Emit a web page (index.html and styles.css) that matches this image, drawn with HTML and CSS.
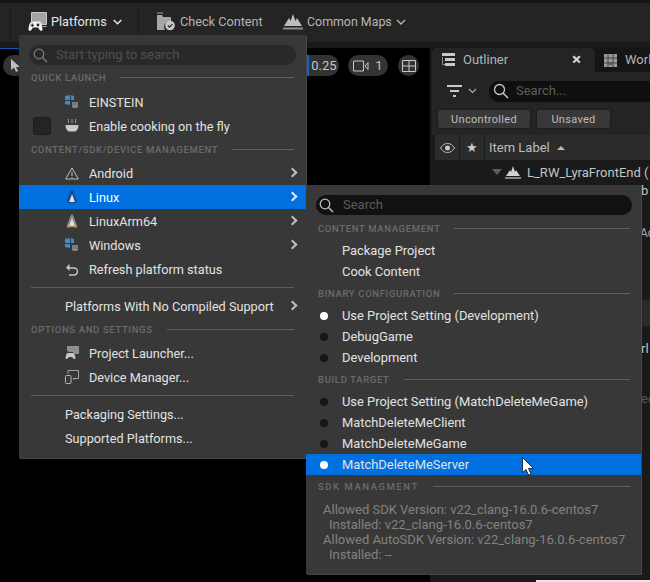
FILE: index.html
```html
<!DOCTYPE html>
<html lang="en">
<head>
<meta charset="utf-8">
<title>Platforms menu</title>
<link rel="stylesheet" href="styles.css">
</head>
<body>
<div class="app">
  <header class="toolbar">
    <div class="tool tool-platforms">
      <svg class="tool-ic" width="19" height="20" viewBox="0 0 19 20"><path d="M3.500.5h15v12h-5l-1-3H5l-1.500 1z" fill="#a4a4a4" stroke="#e2e2e2" stroke-width=".8"/><path d="M14.500 14.500h4" stroke="#aaa"/><path d="M4 10h7c2 0 3 2.500 3.500 7 .2 2-1.800 2.500-2.800 1l-1.700-2.500H5L3.300 18c-1 1.500-3 1-2.800-1C1 12.500 2 10 4 10z" fill="#f4f4f4"/><path d="M2.500 13.200h3.600M4.300 11.400V15" stroke="#222" stroke-width="1.100"/><circle cx="10" cy="13" r="1.400" fill="#222"/></svg>
      <span class="tool-label bright">Platforms</span>
      <svg class="chev" width="9" height="6" viewBox="0 0 9 6"><path d="M.7 1l3.800 3.800L8.300 1" fill="none" stroke="#e8e8e8" stroke-width="1.500"/></svg>
    </div>
    <div class="tool tool-check">
      <svg class="tool-ic" width="19" height="19" viewBox="0 0 19 19"><path d="M1 3h5l1 2h8v4a6 6 0 0 0-6 9H1z" fill="#a6a6a6"/><path d="M1 1h6" stroke="#777" stroke-width="1.500"/><circle cx="14" cy="13.500" r="4.800" fill="#c8c8c8"/><path d="M11.800 13.500l1.700 1.700 2.800-3" fill="none" stroke="#222" stroke-width="1.200"/></svg>
      <span class="tool-label">Check Content</span>
    </div>
    <div class="tool tool-maps">
      <svg class="tool-ic" width="20" height="16" viewBox="0 0 20 16"><path d="M1 12L6 4l1.500 3L10 0l2.500 7L14 4l5 8z" fill="#bdbdbd"/><path d="M0 14.500h20" stroke="#8d8d8d" stroke-width="2"/></svg>
      <span class="tool-label tool-label-maps">Common Maps</span>
      <svg class="chev" width="10" height="6" viewBox="0 0 10 6"><path d="M1 1l4 4 4-4" fill="none" stroke="#b8b8b8" stroke-width="1.300"/></svg>
    </div>
  </header>

  <main class="workspace">
    <section class="viewport">
      <div class="vp-controls">
        <span class="pill pill-select">
          <svg width="11" height="15" viewBox="0 0 11 15"><path d="M1 1v11l3-2.500 2 4.500 2-1-2-4h4z" fill="#bdbdbd"/></svg>
        </span>
        <span class="vp-right">
          <span class="pill pill-speed">0.25</span>
          <span class="pill pill-cam">
            <svg width="16" height="12" viewBox="0 0 16 12"><path d="M.5 1h10v10H.5zM15 2.500L12 6l3 3.500z" fill="none" stroke="#c8c8c8"/></svg>
            <span>1</span>
          </span>
          <span class="pill pill-grid">
            <svg width="14" height="12" viewBox="0 0 14 12"><path d="M.5.500h13v11H.5zM.5 6h13M7 .5v11" fill="none" stroke="#c8c8c8"/></svg>
          </span>
        </span>
      </div>
    </section>

    <aside class="panel">
      <div class="tabs">
        <div class="tab tab-active">
          <svg class="fix" width="15" height="15" viewBox="0 0 15 15"><path d="M1 0h13v3H1zM4 5h10v3H4zM4 10h10v3H4z" fill="#c8c8c8"/><path d="M1.500 4v7.500H4" fill="none" stroke="#888"/></svg>
          <span class="tab-name">Outliner</span>
          <span class="tab-x">×</span>
        </div>
        <div class="tab tab-other">
          <svg class="fix" width="13" height="13" viewBox="0 0 13 13"><rect width="13" height="13" fill="#9a9a9a"/><path d="M4 0v13M9 0v13M0 4h13M0 9h13" stroke="#444"/><rect x="5" y="8" width="3" height="3" fill="#2d5fa8"/></svg>
          <span class="tab-name">Worl</span>
        </div>
      </div>
      <div class="filter-row">
        <svg class="fix" width="15" height="12" viewBox="0 0 15 12"><path d="M0 1h15M3 6h9M6 11h3" stroke="#c8c8c8" stroke-width="2"/></svg>
        <svg class="fix" width="9" height="6" viewBox="0 0 9 6"><path d="M1 1l3.500 3.500L8 1" fill="none" stroke="#aaa" stroke-width="1.200"/></svg>
        <div class="panel-search">
          <svg class="fix" width="16" height="16" viewBox="0 0 16 16"><circle cx="6.500" cy="6.500" r="5" fill="none" stroke="#c8c8c8" stroke-width="1.300"/><path d="M10 10l5 5" stroke="#c8c8c8" stroke-width="1.500"/></svg>
          <span>Search...</span>
        </div>
      </div>
      <div class="chip-row">
        <span class="chip chip-a">Uncontrolled</span>
        <span class="chip chip-b">Unsaved</span>
      </div>
      <div class="col-head">
        <span class="col col-eye"><svg width="15" height="10" viewBox="0 0 15 10"><path d="M.5 5C3 1.500 5 .5 7.500.5S12 1.500 14.500 5C12 8.500 10 9.500 7.500 9.500S3 8.500.5 5z" fill="none" stroke="#c8c8c8"/><circle cx="7.500" cy="5" r="2.500" fill="#c8c8c8"/></svg></span>
        <span class="col col-star">★</span>
        <span class="col col-label">Item Label <i class="sort-up"></i></span>
      </div>
      <div class="tree-row">
        <i class="expander"></i>
        <svg class="fix" width="16" height="13" viewBox="0 0 16 13"><path d="M1 10l4-6 1 2 2-6 2 6 1-2 4 6z" fill="#d0d0d0"/><path d="M0 12h16" stroke="#aaa" stroke-width="1.500"/></svg>
        <span>L_RW_LyraFrontEnd (</span>
      </div>
      <div class="peek peek-b">b</div>
      <div class="peek peek-ac">Ac</div>
      <div class="peek-band"></div>
      <div class="peek peek-rl">rl</div>
      <div class="peek peek-ed">ed</div>
    </aside>
  </main>
  <div class="bottom-edge"><span class="bottom-white"></span></div>
</div>

<nav class="menu menu-main">
  <div class="search search-main">
    <svg class="fix" width="15" height="15" viewBox="0 0 15 15"><circle cx="6" cy="6" r="4.800" fill="none" stroke="#777" stroke-width="1.300"/><path d="M9.500 9.500l4.500 4.500" stroke="#777" stroke-width="1.500"/></svg>
    <span>Start typing to search</span>
  </div>
  <div class="head head-main"><span>QUICK LAUNCH</span></div>
  <div class="row"><span class="lead"></span>
    <svg class="ic" width="14" height="14" viewBox="0 0 14 14"><path d="M0 1l5-1v5H0zM6 0l3 1v4H6zM0 6h5v4L0 9z" fill="#3f8cc4"/><path d="M8 7v5h4V7M10 7v5" fill="none" stroke="#b5b5b5" stroke-width="1.100"/></svg>
    <span>EINSTEIN</span></div>
  <div class="row"><span class="lead"><i class="check"></i></span>
    <svg class="ic" width="13" height="14" viewBox="0 0 13 14"><path d="M3 0v4M6.500 0v4M10 0v4" stroke="#999"/><path d="M0 6h13c0 4-2 6-3 6.500H3C2 12 0 10 0 6z" fill="#c8c8c8"/></svg>
    <span>Enable cooking on the fly</span></div>
  <div class="head head-main"><span>CONTENT/SDK/DEVICE MANAGEMENT</span></div>
  <div class="row"><span class="lead"></span>
    <svg class="ic" width="14" height="13" viewBox="0 0 14 13"><path d="M7 1l6.300 11H.7zM7 5v4M7 10v1" fill="none" stroke="#bdbdbd"/></svg>
    <span>Android</span><i class="arrow"></i></div>
  <div class="row row-on"><span class="lead"></span>
    <svg class="ic" width="12" height="14" viewBox="0 0 12 14"><path d="M6 0c2 2 3 7 5 11 0 1-1 2-1 2H2s-1-1-1-2C3 7 4 2 6 0z" fill="#14477f"/><path d="M6 4c1 3 2 5 3 8H3c1-3 2-5 3-8z" fill="#d3e3f2"/></svg>
    <span>Linux</span><i class="arrow"></i></div>
  <div class="row"><span class="lead"></span>
    <svg class="ic" width="12" height="14" viewBox="0 0 12 14"><path d="M6 0c2 2 3 7 5 11 0 1-1 2-1 2H2s-1-1-1-2C3 7 4 2 6 0z" fill="#8a8a8a"/><path d="M6 4c1 3 2 5 3 8H3c1-3 2-5 3-8z" fill="#e0e0e0"/><path d="M1 11.500h3.500v2H1zM7.500 11.500H11v2H7.500z" fill="#c8913f"/></svg>
    <span>LinuxArm64</span><i class="arrow"></i></div>
  <div class="row"><span class="lead"></span>
    <svg class="ic" width="14" height="14" viewBox="0 0 14 14"><path d="M0 1l5-1v5H0zM6 0l3 1v4H6zM0 6h5v4L0 9z" fill="#3f8cc4"/><path d="M8 7v5h4V7M10 7v5" fill="none" stroke="#b5b5b5" stroke-width="1.100"/></svg>
    <span>Windows</span><i class="arrow"></i></div>
  <div class="row"><span class="lead"></span>
    <svg class="ic" width="14" height="13" viewBox="0 0 14 13"><path d="M3 5h6a3.500 3.500 0 0 1 0 7H4" fill="none" stroke="#c4c4c4" stroke-width="1.400"/><path d="M1 4.500L4.500 1v7z" fill="#c4c4c4"/></svg>
    <span>Refresh platform status</span></div>
  <div class="sep sep-a"></div>
  <div class="row row-plain"><span>Platforms With No Compiled Support</span><i class="arrow"></i></div>
  <div class="head head-main"><span>OPTIONS AND SETTINGS</span></div>
  <div class="row"><span class="lead"></span>
    <svg class="ic" width="14" height="14" viewBox="0 0 14 14"><path d="M2 0h12v8H9L8 6H4L2 5z" fill="#8e8e8e"/><path d="M3 7h5c1.500 0 2 2 2.500 5 0 1-1 1.500-2 .5L7 11H4l-1.500 1.500c-1 1-2 .5-2-.5C1 9 1.500 7 3 7z" fill="#c8c8c8"/></svg>
    <span>Project Launcher...</span></div>
  <div class="row"><span class="lead"></span>
    <svg class="ic" width="14" height="14" viewBox="0 0 14 14"><path d="M3 4V.5h10.500v8H8M9 9v1" fill="none" stroke="#a4a4a4"/><rect x=".5" y="5.500" width="5.500" height="8" rx="1" fill="none" stroke="#b5b5b5"/></svg>
    <span>Device Manager...</span></div>
  <div class="sep sep-b"></div>
  <div class="row row-plain"><span>Packaging Settings...</span></div>
  <div class="row row-plain"><span>Supported Platforms...</span></div>
</nav>

<nav class="menu menu-sub">
  <div class="search search-sub">
    <svg class="fix" width="15" height="15" viewBox="0 0 15 15"><circle cx="6" cy="6" r="4.800" fill="none" stroke="#bdbdbd" stroke-width="1.300"/><path d="M9.500 9.500l4.500 4.500" stroke="#bdbdbd" stroke-width="1.500"/></svg>
    <span>Search</span>
  </div>
  <div class="head head-sub head-first"><span>CONTENT MANAGEMENT</span></div>
  <div class="sub-row"><span class="radio-slot"></span><span>Package Project</span></div>
  <div class="sub-row"><span class="radio-slot"></span><span>Cook Content</span></div>
  <div class="head head-sub"><span>BINARY CONFIGURATION</span></div>
  <div class="sub-row"><span class="radio-slot"><i class="radio radio-on"></i></span><span>Use Project Setting (Development)</span></div>
  <div class="sub-row"><span class="radio-slot"><i class="radio"></i></span><span>DebugGame</span></div>
  <div class="sub-row"><span class="radio-slot"><i class="radio"></i></span><span>Development</span></div>
  <div class="head head-sub"><span>BUILD TARGET</span></div>
  <div class="sub-row"><span class="radio-slot"><i class="radio"></i></span><span>Use Project Setting (MatchDeleteMeGame)</span></div>
  <div class="sub-row"><span class="radio-slot"><i class="radio"></i></span><span>MatchDeleteMeClient</span></div>
  <div class="sub-row"><span class="radio-slot"><i class="radio"></i></span><span>MatchDeleteMeGame</span></div>
  <div class="sub-row row-on"><span class="radio-slot"><i class="radio radio-on"></i></span><span>MatchDeleteMeServer</span>
    <svg class="cursor" width="12" height="19" viewBox="0 0 12 19"><path d="M.5.500v15l3.500-3 2.500 5.500 2.500-1-2.500-5.500h5z" fill="#fff" stroke="#111" stroke-width=".8"/></svg>
  </div>
  <div class="head head-sub head-sdk"><span>SDK MANAGMENT</span></div>
  <div class="sdk">
    <div>Allowed SDK Version: v22_clang-16.0.6-centos7</div>
    <div class="sdk-in">Installed: v22_clang-16.0.6-centos7</div>
    <div>Allowed AutoSDK Version: v22_clang-16.0.6-centos7</div>
    <div class="sdk-in">Installed: --</div>
  </div>
</nav>
</body>
</html>
```
FILE: styles.css
```css
* { box-sizing: border-box; }
html, body { margin: 0; height: 100%; background: #000; overflow: hidden; }
body { font-family: Roboto, "Liberation Sans", sans-serif; font-size: 13px; color: #d8d8d8; }
.fix { flex: none; }

.app { width: 650px; height: 582px; display: flex; flex-direction: column; position: relative; background: #000; }

/* toolbar */
.toolbar { height: 43px; flex: none; display: flex; align-items: stretch; background: #242424; border-top: 3px solid #151515; border-bottom: 1px solid #1a1a1a; padding: 0 0 0 10px; }
.tool { display: flex; align-items: center; padding-bottom: 2px; }
.tool-label { color: #b6b6b6; font-size: 12.7px; }
.tool-label.bright { color: #e6e6e6; }
.tool-label-maps { font-size: 12.4px; }
.tool-ic { flex: none; }
.tool-platforms { width: 129px; padding-left: 17px; border-left: 1px solid #1b1b1b; border-right: 1px solid #1b1b1b; }
.tool-platforms .tool-label { margin: 0 6px 0 4px; }
.tool-check { width: 127px; margin-left: 17px; gap: 5px; }
.tool-maps { gap: 4px; }

/* workspace */
.workspace { flex: 1; display: flex; min-height: 0; background: #1a1a1a; }
.viewport { width: 430px; flex: none; margin-top: 5px; background: linear-gradient(#0f5ab0, #0f5ab0) no-repeat 0 0 / 306px 1px, #000; }
.vp-controls { display: flex; justify-content: space-between; align-items: center; padding: 7px 11px 0 3px; }
.vp-right { display: flex; gap: 9px; align-items: center; }
.pill { height: 21px; border-radius: 11px; background: #333; display: flex; align-items: center; justify-content: center; color: #c4c4c4; font-size: 13px; }
.pill-select { width: 24px; }
.pill-speed { width: 33px; border-left: 3px solid #0f66c8; border-radius: 0 11px 11px 0; }
.pill-cam { width: 40px; gap: 6px; }
.pill-grid { width: 21px; margin-left: 1px; }

.panel { flex: 1; min-width: 0; margin-left: 2px; position: relative; background: #1a1a1a; overflow: hidden; margin-top: 5px; }
.tabs { height: 24px; display: flex; background: #151515; }
.tab { display: flex; align-items: center; gap: 7px; color: #b4b4b4; white-space: nowrap; flex: none; }
.tab-name { padding-bottom: 2px; }
.tab-active { width: 163px; padding-left: 9px; background: #242424; border-radius: 5px 5px 0 0; position: relative; }
.tab-x { position: absolute; left: 140px; top: 3px; color: #d8d8d8; font-size: 17px; line-height: 17px; font-weight: 700; }
.tab-other { padding-left: 9px; gap: 8px; }
.filter-row { height: 37px; background: #242424; display: flex; align-items: center; gap: 6px; padding: 1px 0 0 15px; }
.panel-search { flex: 1; height: 21px; margin-left: 6px; border-radius: 10px 0 0 10px; background: #0f0f0f; display: flex; align-items: center; gap: 7px; padding-left: 4px; color: #5e5e5e; }
.panel-search span { padding-bottom: 2px; }
.chip-row { height: 26px; background: #242424; display: flex; gap: 5px; padding: 0 0 0 5px; }
.chip { height: 20px; border-radius: 3px; background: #383838; color: #bcbcbc; font-size: 11px; letter-spacing: .3px; display: flex; align-items: center; justify-content: center; border: 1px solid #1c1c1c; }
.chip-a { width: 94px; }
.chip-b { width: 75px; }
.col-head { height: 25px; margin-left: 3px; background: #2b2b2b; display: flex; align-items: center; }
.col { height: 100%; display: flex; align-items: center; border-right: 1px solid #1d1d1d; color: #bdbdbd; }
.col-eye { width: 25px; justify-content: center; }
.col-star { width: 25px; justify-content: center; font-size: 13px; color: #ccc; }
.col-label { flex: 1; border: 0; padding-left: 4px; gap: 6px; }
.sort-up { width: 0; height: 0; border: 4px solid transparent; border-top: 0; border-bottom: 4px solid #bbb; margin-left: 1px; }
.tree-row { height: 24px; display: flex; align-items: center; padding-left: 60px; gap: 3px; color: #c4c4c4; white-space: nowrap; }
.tree-row span { margin-left: 3px; }
.expander { width: 0; height: 0; border: 5px solid transparent; border-bottom: 0; border-top: 6px solid #5f5f5f; }
.peek { position: absolute; left: 209px; color: #c4c4c4; line-height: 14px; }
.peek-b { top: 136px; }
.peek-ac { top: 178px; color: #a8a8a8; left: 208px; font-size: 12px; }
.peek-band { position: absolute; left: 209px; width: 9px; top: 252px; height: 26px; background: #2a2a2a; }
.peek-rl { top: 294px; }
.peek-ed { top: 344px; color: #555; }

.bottom-edge { position: absolute; left: 536px; right: 0; bottom: 0; height: 2px; }
.bottom-white { display: block; height: 100%; background: #e8e8e8; }

/* menus */
.menu { position: absolute; background: #383838; box-shadow: 1px 1px 0 #464646; }
.menu-main { left: 19px; top: 35px; width: 287px; height: 423px; padding: 10px 0 0; }
.menu-sub { left: 306px; top: 185px; width: 335px; height: 389px; padding: 10px 0 0; }

.search { height: 20px; border-radius: 10px; display: flex; align-items: center; }
.search span { font-size: 13px; padding-bottom: 1px; }
.search-main { margin: 0 10px; background: #292929; padding-left: 4px; gap: 8px; color: #4f4f4f; }
.search-sub { margin: 0 9px 0 10px; background: #111; padding-left: 3px; gap: 9px; color: #5c5c5c; }

.head { display: flex; align-items: center; gap: 14px; font-size: 9.5px; font-weight: 500; letter-spacing: .65px; color: #6b6b6b; white-space: nowrap; }
.head::after { content: ""; flex: 1; height: 1px; background: #5e5e5e; }
.head-main { height: 23px; padding: 0 12px; }
.menu-main .search + .head { height: 25px; }
.head-sub { height: 23px; padding: 0 11px 0 12px; }
.head-first { margin-top: 2px; }
.head-sdk { letter-spacing: 1.55px; }

.row { height: 24px; display: flex; align-items: center; color: #e2e2e2; font-size: 12.7px; white-space: nowrap; position: relative; }
.lead { width: 46px; flex: none; padding-left: 14px; display: flex; align-items: center; }
.check { width: 18px; height: 18px; border-radius: 3px; background: #242424; border: 1px solid #1c1c1c; }
.ic { flex: none; width: 14px; margin-right: 10px; }
.row-plain { padding-left: 46px; }
.row-on { background: #0070e0; color: #fff; }
.arrow { position: absolute; left: 270px; top: 8px; width: 7px; height: 7px; border-top: 2px solid #bdbdbd; border-right: 2px solid #bdbdbd; transform: rotate(45deg); }
.row-on .arrow { border-color: #dfe9f5; }
.sep { height: 1px; background: #5e5e5e; margin: 6px 12px; }

.sub-row { height: 21px; display: flex; align-items: center; color: #e2e2e2; font-size: 12.9px; white-space: nowrap; position: relative; }
.radio-slot { width: 36px; flex: none; padding-left: 14px; display: flex; align-items: center; }
.radio { width: 8px; height: 8px; border-radius: 50%; background: #161616; }
.radio-on { background: #fff; }
.cursor { position: absolute; left: 216px; top: 3px; }

.sdk { padding: 4px 0 0 17px; color: #828282; line-height: 15px; white-space: nowrap; }
.sdk-in { padding-left: 6px; }
```
